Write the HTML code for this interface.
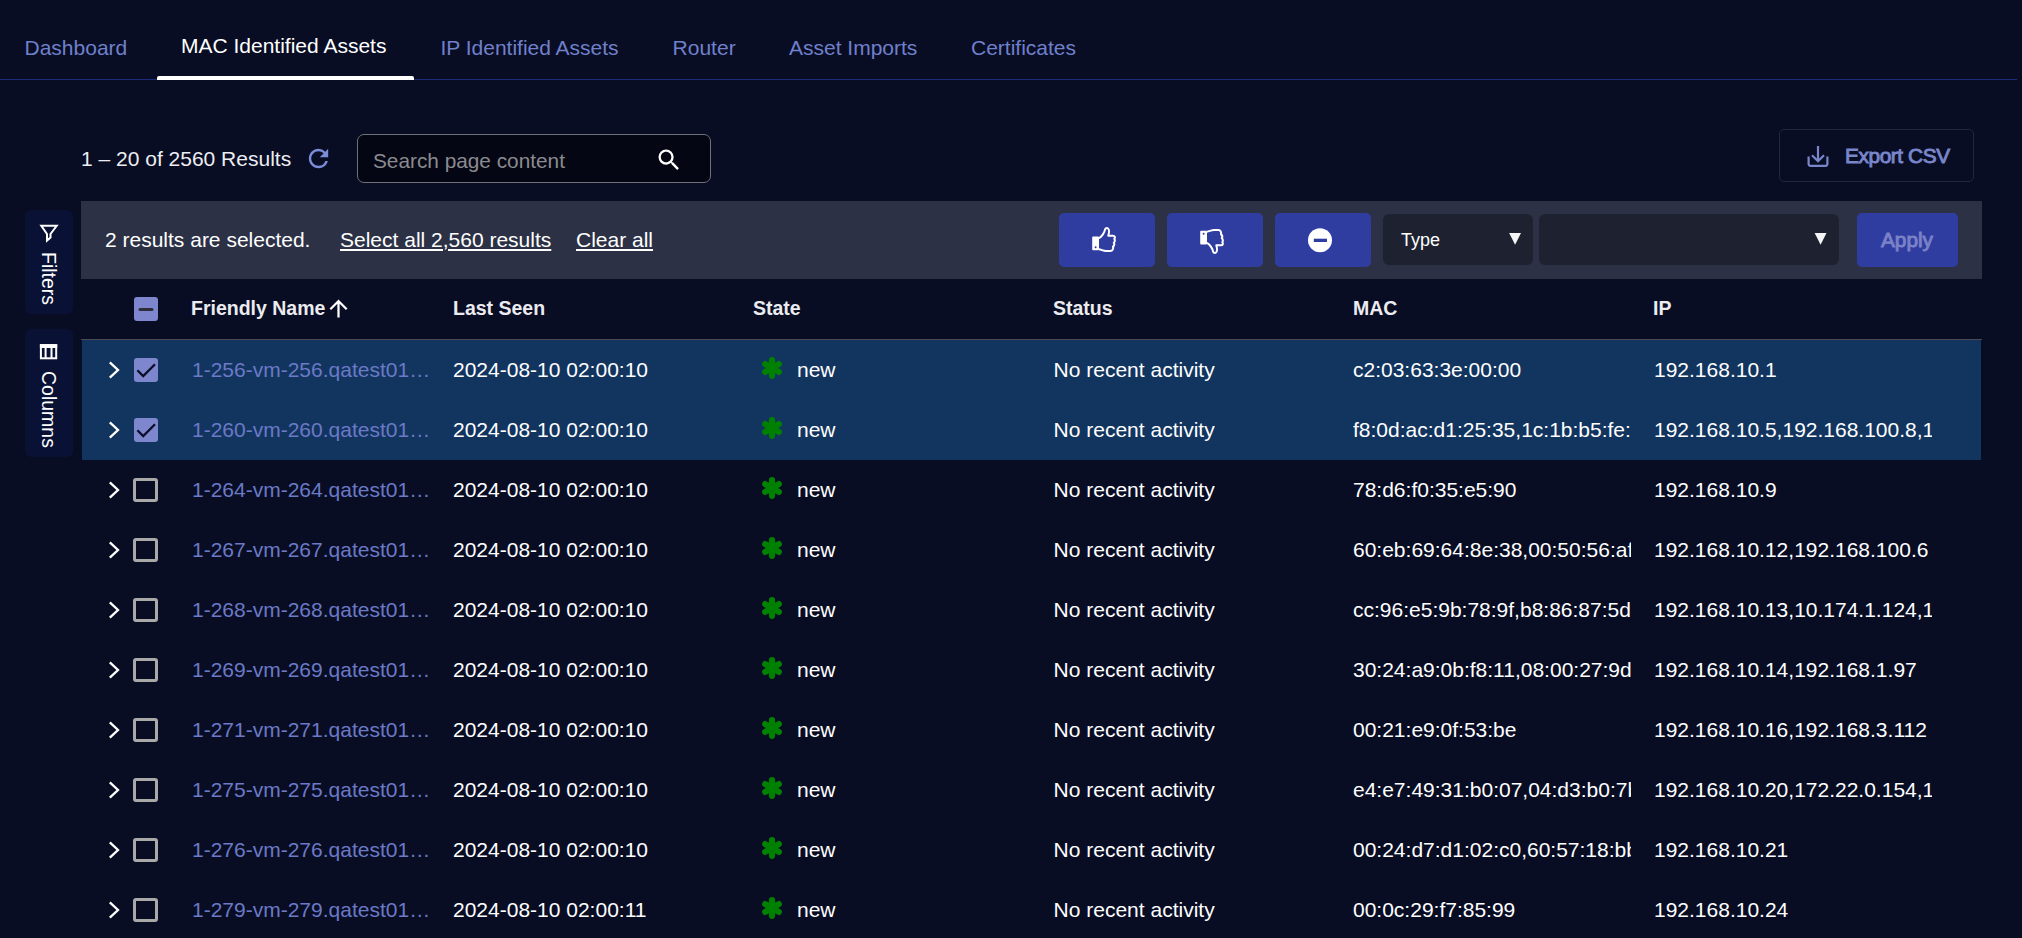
<!DOCTYPE html>
<html lang="en"><head><meta charset="utf-8"><title>MAC Identified Assets</title>
<style>
*{box-sizing:border-box}
html,body{margin:0;padding:0}
body{width:2022px;height:938px;overflow:hidden;background:#080d24;color:#fff;font-family:"Liberation Sans",Arial,sans-serif;font-size:21px;position:relative}
.abs{position:absolute;white-space:nowrap}
.tab{position:absolute;top:36px;line-height:24px;color:#7080cb;white-space:nowrap}
.tab.active{color:#fff;top:34px}
.tabline{position:absolute;left:0;top:79px;width:2017px;height:1px;background:#1c2c78}
.tabind{position:absolute;left:157px;top:76px;width:257px;height:4px;background:#fff;border-radius:2px 2px 0 0}
.results{left:81px;top:147px;line-height:24px;color:#ededf2}
.search{position:absolute;left:357px;top:134px;width:354px;height:49px;border:1px solid #6f7078;border-radius:7px;background:#050614}
.search span{position:absolute;left:15px;top:14px;line-height:24px;color:#8b8b8f;font-size:20.8px}
.export{position:absolute;left:1779px;top:129px;width:195px;height:53px;border:1px solid #22263f;border-radius:5px}
.export span{position:absolute;left:65px;top:14px;line-height:24px;font-size:20.8px;color:#7986cb;-webkit-text-stroke:0.900px #7986cb;letter-spacing:-0.400px}
.side{position:absolute;left:25px;width:48px;background:#091235;border-radius:6px}
.side span{position:absolute;writing-mode:vertical-rl;font-size:19.5px;line-height:24px;left:11.6px;color:#fff}
.toolbar{position:absolute;left:81px;top:201px;width:1901px;height:78px;background:#2c3145}
.toolbar .t{position:absolute;top:27px;line-height:24px;color:#fff;white-space:nowrap}
.toolbar .u{text-decoration:underline;text-underline-offset:2px}
.btn{position:absolute;top:12px;width:96px;height:54px;background:#303da0;border-radius:5px}
.sel1,.sel2{position:absolute;top:13px;height:51px;background:#1e2230;border-radius:6px}
.tri{position:absolute;width:12.400px;height:12.300px;background:#f5f5f5;clip-path:polygon(0 0,100% 0,50% 100%);top:18.500px}
.th{position:absolute;top:296px;line-height:24px;font-weight:bold;font-size:19.5px;color:#ebebf0;white-space:nowrap}
.hline{position:absolute;left:81px;top:339px;width:1901px;height:1px;background:#4b4a52}
.row{position:absolute;left:81px;width:1901px;height:60px}
.row.sel:before{content:"";position:absolute;left:1px;top:0;width:1899px;height:60px;background:#123560}

.c{position:absolute;top:18px;line-height:24px;white-space:nowrap;overflow:hidden;color:#fff}
.name{left:111px;width:241px;text-overflow:ellipsis;color:#6b79c6}
.seen{left:372px}
.state{left:716px}
.status{left:972.600px}
.mac{left:1272px;width:278px}
.ip{left:1573px;width:278px}
.ast{position:absolute;left:679px;top:16px;width:24px;height:24px}
.chev{position:absolute;left:27px;top:20.500px;width:12px;height:18px}
.cb{position:absolute;left:53px;top:18px;width:24px;height:24px;border-radius:3px}
.cb.on{background:#7e87ce}
.cb.off{border:3px solid #a9a9a9;background:transparent;left:52.400px;top:18px;width:24.400px;height:24px;border-radius:3px}
.cb svg{display:block;width:24px;height:24px}
</style></head>
<body>
<nav class="tabs">
<a class="tab" style="left:24.500px">Dashboard</a>
<a class="tab active" style="left:181px">MAC Identified Assets</a>
<a class="tab" style="left:440.400px">IP Identified Assets</a>
<a class="tab" style="left:672.600px">Router</a>
<a class="tab" style="left:789px">Asset Imports</a>
<a class="tab" style="left:971px">Certificates</a>
<div class="tabline"></div><div class="tabind"></div>
</nav>
<div class="abs results">1 – 20 of 2560 Results</div>
<svg class="abs" style="left:304.300px;top:144px;width:29px;height:29px" viewBox="0 0 24 24"><path fill="#7c8cd8" d="M17.65 6.35A7.958 7.958 0 0 0 12 4c-4.42 0-7.99 3.58-7.99 8s3.57 8 7.99 8c3.73 0 6.84-2.55 7.73-6h-2.08A5.99 5.99 0 0 1 12 18c-3.31 0-6-2.69-6-6s2.690-6 6-6c1.660 0 3.140.69 4.220 1.780L13 11h7V4l-2.350 2.350z"/></svg>
<div class="search"><span>Search page content</span>
<svg class="abs" style="left:297.400px;top:10.800px;width:28px;height:28px" viewBox="0 0 24 24"><path fill="#fff" d="M15.5 14h-.79l-.28-.27A6.471 6.471 0 0 0 16 9.500 6.500 6.500 0 1 0 9.500 16c1.610 0 3.090-.59 4.230-1.570l.27.28v.79l5 4.990L20.490 19l-4.990-5zm-6 0C7.010 14 5 11.990 5 9.500S7.010 5 9.500 5 14 7.010 14 9.500 11.990 14 9.500 14z"/></svg>
</div>
<div class="export"><svg class="abs" style="left:24px;top:12px;width:30px;height:30px" viewBox="0 0 30 30"><g fill="none" stroke="#7986cb" stroke-width="2.200"><path d="M4.600 14.500v7.300q0 2 2 2h14.800q2 0 2-2v-7.300"/><path d="M14 4v15M8 13.200l6 6 6-6"/></g></svg><span>Export CSV</span></div>
<div class="side" style="top:210px;height:104px"><svg class="abs" style="left:12px;top:12px;width:24px;height:24px" viewBox="0 0 24 24"><path d="M4.300 3.800 L19.700 3.800 L13.500 12 L13.500 15.600 L10 18.600 L10 12 Z" fill="none" stroke="#fff" stroke-width="2" stroke-linejoin="miter"/></svg><span style="top:42px">Filters</span></div>
<div class="side" style="top:329px;height:128px"><svg class="abs" style="left:12px;top:12px;width:24px;height:24px" viewBox="0 0 24 24"><rect x="3.900" y="4.200" width="15.300" height="13.100" fill="none" stroke="#fff" stroke-width="2"/><rect x="2.900" y="3.200" width="17.300" height="3.800" fill="#fff"/><path d="M8.600 5v12M14.500 5v12" stroke="#fff" stroke-width="2"/></svg><span style="top:42px">Columns</span></div>
<div class="toolbar">
<span class="t" style="left:24px">2 results are selected.</span>
<a class="t u" style="left:259px">Select all 2,560 results</a>
<a class="t u" style="left:495px">Clear all</a>
<div class="btn" style="left:978px"><svg class="abs" style="left:33px;top:14px;width:26px;height:27px" viewBox="0 0 26 27"><g ><rect x="0.200" y="9.600" width="6.800" height="13.600" rx="1" fill="#fff"/><circle cx="3.600" cy="20.300" r="1" fill="#303da0"/><path d="M6.900 11.200 C9.800 9.800 12.600 5.200 13 2.700 C13.300 1 15 .800 16 1.500 C17.600 2.600 17.300 5.200 16.300 8.700 L21 8.700 C23 8.700 23.400 10.700 22.300 11.900 C23.300 13.100 22.900 14.900 21.800 15.700 C22.600 17.100 22.100 18.800 21 19.600 C21.600 21.600 20.500 23.900 18.500 23.900 L14 23.900 C11.500 23.900 9.500 22.700 6.900 22.300" fill="none" stroke="#fff" stroke-width="2" stroke-linejoin="round"/></g></svg></div>
<div class="btn" style="left:1086px"><svg class="abs" style="left:33px;top:15px;width:26px;height:27px" viewBox="0 0 26 27"><g transform="translate(0 26) scale(1 -1)"><rect x="0.200" y="9.600" width="6.800" height="13.600" rx="1" fill="#fff"/><circle cx="3.600" cy="20.300" r="1" fill="#303da0"/><path d="M6.900 11.200 C9.800 9.800 12.600 5.200 13 2.700 C13.300 1 15 .800 16 1.500 C17.600 2.600 17.300 5.200 16.300 8.700 L21 8.700 C23 8.700 23.400 10.700 22.300 11.900 C23.300 13.100 22.900 14.900 21.800 15.700 C22.600 17.100 22.100 18.800 21 19.600 C21.600 21.600 20.500 23.900 18.500 23.900 L14 23.900 C11.500 23.900 9.500 22.700 6.900 22.300" fill="none" stroke="#fff" stroke-width="2" stroke-linejoin="round"/></g></svg></div>
<div class="btn" style="left:1194px"><svg class="abs" style="left:32.100px;top:15px;width:26px;height:26px" viewBox="0 0 26 26"><circle cx="13" cy="12.300" r="12" fill="#fff"/><rect x="6.800" y="10.700" width="13.200" height="3.300" fill="#303da0"/></svg></div>
<div class="sel1" style="left:1302px;width:150px"><span class="abs" style="left:18px;top:14px;line-height:24px;font-size:18px">Type</span><i class="tri" style="left:125.900px"></i></div>
<div class="sel2" style="left:1458px;width:300px"><i class="tri" style="left:275.400px"></i></div>
<div class="btn" style="left:1776px;width:101px"><span class="abs" style="left:24px;top:15px;line-height:24px;font-size:20.800px;color:#7b82c8;-webkit-text-stroke:0.900px #7b82c8">Apply</span></div>
</div>
<span class="cb on" style="left:134px;top:297px"><svg viewBox="0 0 24 24"><path d="M6 12.500h12" stroke="#2e2e36" stroke-width="3" stroke-linecap="round" fill="none"/></svg></span>
<span class="th" style="left:191px">Friendly Name</span>
<svg class="abs" style="left:325px;top:295px;width:27px;height:27px" viewBox="0 0 24 24"><path fill="#fff" d="M4 12l1.410 1.410L11 7.830V20h2V7.830l5.580 5.590L20 12l-8-8-8 8z"/></svg>
<span class="th" style="left:453px">Last Seen</span>
<span class="th" style="left:753px">State</span>
<span class="th" style="left:1053px">Status</span>
<span class="th" style="left:1353px">MAC</span>
<span class="th" style="left:1653px">IP</span>
<div class="hline"></div>

<div class="tbody">
<div class="row sel" style="top:340px"><svg class="chev" viewBox="0 0 12 18"><path d="M1.800 1.400 L10 9 L1.800 16.600" fill="none" stroke="#fff" stroke-width="2.300"/></svg><span class="cb on"><svg viewBox="0 0 24 24"><path d="M3.400 12.200 L9.200 18 L21 6.200" fill="none" stroke="#0b0e28" stroke-width="2.300"/></svg></span><a class="c name">1-256-vm-256.qatest01.example.com</a><span class="c seen">2024-08-10 02:00:10</span><svg class="ast" viewBox="0 0 24 24"><g stroke="#008000" stroke-width="6.200" stroke-linecap="round"><line x1="12" y1="4.200" x2="12" y2="19.800"/><line x1="5.200" y1="8.100" x2="18.800" y2="15.900"/><line x1="5.200" y1="15.900" x2="18.800" y2="8.100"/></g></svg><span class="c state">new</span><span class="c status">No recent activity</span><span class="c mac">c2:03:63:3e:00:00</span><span class="c ip">192.168.10.1</span></div>
<div class="row sel" style="top:400px"><svg class="chev" viewBox="0 0 12 18"><path d="M1.800 1.400 L10 9 L1.800 16.600" fill="none" stroke="#fff" stroke-width="2.300"/></svg><span class="cb on"><svg viewBox="0 0 24 24"><path d="M3.400 12.200 L9.200 18 L21 6.200" fill="none" stroke="#0b0e28" stroke-width="2.300"/></svg></span><a class="c name">1-260-vm-260.qatest01.example.com</a><span class="c seen">2024-08-10 02:00:10</span><svg class="ast" viewBox="0 0 24 24"><g stroke="#008000" stroke-width="6.200" stroke-linecap="round"><line x1="12" y1="4.200" x2="12" y2="19.800"/><line x1="5.200" y1="8.100" x2="18.800" y2="15.900"/><line x1="5.200" y1="15.900" x2="18.800" y2="8.100"/></g></svg><span class="c state">new</span><span class="c status">No recent activity</span><span class="c mac">f8:0d:ac:d1:25:35,1c:1b:b5:fe:61:22</span><span class="c ip">192.168.10.5,192.168.100.8,10.0.0.5</span></div>
<div class="row" style="top:460px"><svg class="chev" viewBox="0 0 12 18"><path d="M1.800 1.400 L10 9 L1.800 16.600" fill="none" stroke="#fff" stroke-width="2.300"/></svg><span class="cb off"></span><a class="c name">1-264-vm-264.qatest01.example.com</a><span class="c seen">2024-08-10 02:00:10</span><svg class="ast" viewBox="0 0 24 24"><g stroke="#008000" stroke-width="6.200" stroke-linecap="round"><line x1="12" y1="4.200" x2="12" y2="19.800"/><line x1="5.200" y1="8.100" x2="18.800" y2="15.900"/><line x1="5.200" y1="15.900" x2="18.800" y2="8.100"/></g></svg><span class="c state">new</span><span class="c status">No recent activity</span><span class="c mac">78:d6:f0:35:e5:90</span><span class="c ip">192.168.10.9</span></div>
<div class="row" style="top:520px"><svg class="chev" viewBox="0 0 12 18"><path d="M1.800 1.400 L10 9 L1.800 16.600" fill="none" stroke="#fff" stroke-width="2.300"/></svg><span class="cb off"></span><a class="c name">1-267-vm-267.qatest01.example.com</a><span class="c seen">2024-08-10 02:00:10</span><svg class="ast" viewBox="0 0 24 24"><g stroke="#008000" stroke-width="6.200" stroke-linecap="round"><line x1="12" y1="4.200" x2="12" y2="19.800"/><line x1="5.200" y1="8.100" x2="18.800" y2="15.900"/><line x1="5.200" y1="15.900" x2="18.800" y2="8.100"/></g></svg><span class="c state">new</span><span class="c status">No recent activity</span><span class="c mac">60:eb:69:64:8e:38,00:50:56:af:11:22</span><span class="c ip">192.168.10.12,192.168.100.6</span></div>
<div class="row" style="top:580px"><svg class="chev" viewBox="0 0 12 18"><path d="M1.800 1.400 L10 9 L1.800 16.600" fill="none" stroke="#fff" stroke-width="2.300"/></svg><span class="cb off"></span><a class="c name">1-268-vm-268.qatest01.example.com</a><span class="c seen">2024-08-10 02:00:10</span><svg class="ast" viewBox="0 0 24 24"><g stroke="#008000" stroke-width="6.200" stroke-linecap="round"><line x1="12" y1="4.200" x2="12" y2="19.800"/><line x1="5.200" y1="8.100" x2="18.800" y2="15.900"/><line x1="5.200" y1="15.900" x2="18.800" y2="8.100"/></g></svg><span class="c state">new</span><span class="c status">No recent activity</span><span class="c mac">cc:96:e5:9b:78:9f,b8:86:87:5d:11:22</span><span class="c ip">192.168.10.13,10.174.1.124,10.0.0.1</span></div>
<div class="row" style="top:640px"><svg class="chev" viewBox="0 0 12 18"><path d="M1.800 1.400 L10 9 L1.800 16.600" fill="none" stroke="#fff" stroke-width="2.300"/></svg><span class="cb off"></span><a class="c name">1-269-vm-269.qatest01.example.com</a><span class="c seen">2024-08-10 02:00:10</span><svg class="ast" viewBox="0 0 24 24"><g stroke="#008000" stroke-width="6.200" stroke-linecap="round"><line x1="12" y1="4.200" x2="12" y2="19.800"/><line x1="5.200" y1="8.100" x2="18.800" y2="15.900"/><line x1="5.200" y1="15.900" x2="18.800" y2="8.100"/></g></svg><span class="c state">new</span><span class="c status">No recent activity</span><span class="c mac">30:24:a9:0b:f8:11,08:00:27:9d:11:22</span><span class="c ip">192.168.10.14,192.168.1.97</span></div>
<div class="row" style="top:700px"><svg class="chev" viewBox="0 0 12 18"><path d="M1.800 1.400 L10 9 L1.800 16.600" fill="none" stroke="#fff" stroke-width="2.300"/></svg><span class="cb off"></span><a class="c name">1-271-vm-271.qatest01.example.com</a><span class="c seen">2024-08-10 02:00:10</span><svg class="ast" viewBox="0 0 24 24"><g stroke="#008000" stroke-width="6.200" stroke-linecap="round"><line x1="12" y1="4.200" x2="12" y2="19.800"/><line x1="5.200" y1="8.100" x2="18.800" y2="15.900"/><line x1="5.200" y1="15.900" x2="18.800" y2="8.100"/></g></svg><span class="c state">new</span><span class="c status">No recent activity</span><span class="c mac">00:21:e9:0f:53:be</span><span class="c ip">192.168.10.16,192.168.3.112</span></div>
<div class="row" style="top:760px"><svg class="chev" viewBox="0 0 12 18"><path d="M1.800 1.400 L10 9 L1.800 16.600" fill="none" stroke="#fff" stroke-width="2.300"/></svg><span class="cb off"></span><a class="c name">1-275-vm-275.qatest01.example.com</a><span class="c seen">2024-08-10 02:00:10</span><svg class="ast" viewBox="0 0 24 24"><g stroke="#008000" stroke-width="6.200" stroke-linecap="round"><line x1="12" y1="4.200" x2="12" y2="19.800"/><line x1="5.200" y1="8.100" x2="18.800" y2="15.900"/><line x1="5.200" y1="15.900" x2="18.800" y2="8.100"/></g></svg><span class="c state">new</span><span class="c status">No recent activity</span><span class="c mac">e4:e7:49:31:b0:07,04:d3:b0:7b:11:22</span><span class="c ip">192.168.10.20,172.22.0.154,10.0.0.2</span></div>
<div class="row" style="top:820px"><svg class="chev" viewBox="0 0 12 18"><path d="M1.800 1.400 L10 9 L1.800 16.600" fill="none" stroke="#fff" stroke-width="2.300"/></svg><span class="cb off"></span><a class="c name">1-276-vm-276.qatest01.example.com</a><span class="c seen">2024-08-10 02:00:10</span><svg class="ast" viewBox="0 0 24 24"><g stroke="#008000" stroke-width="6.200" stroke-linecap="round"><line x1="12" y1="4.200" x2="12" y2="19.800"/><line x1="5.200" y1="8.100" x2="18.800" y2="15.900"/><line x1="5.200" y1="15.900" x2="18.800" y2="8.100"/></g></svg><span class="c state">new</span><span class="c status">No recent activity</span><span class="c mac">00:24:d7:d1:02:c0,60:57:18:bb:11:22</span><span class="c ip">192.168.10.21</span></div>
<div class="row" style="top:880px"><svg class="chev" viewBox="0 0 12 18"><path d="M1.800 1.400 L10 9 L1.800 16.600" fill="none" stroke="#fff" stroke-width="2.300"/></svg><span class="cb off"></span><a class="c name">1-279-vm-279.qatest01.example.com</a><span class="c seen">2024-08-10 02:00:11</span><svg class="ast" viewBox="0 0 24 24"><g stroke="#008000" stroke-width="6.200" stroke-linecap="round"><line x1="12" y1="4.200" x2="12" y2="19.800"/><line x1="5.200" y1="8.100" x2="18.800" y2="15.900"/><line x1="5.200" y1="15.900" x2="18.800" y2="8.100"/></g></svg><span class="c state">new</span><span class="c status">No recent activity</span><span class="c mac">00:0c:29:f7:85:99</span><span class="c ip">192.168.10.24</span></div>
</div>
</body></html>
